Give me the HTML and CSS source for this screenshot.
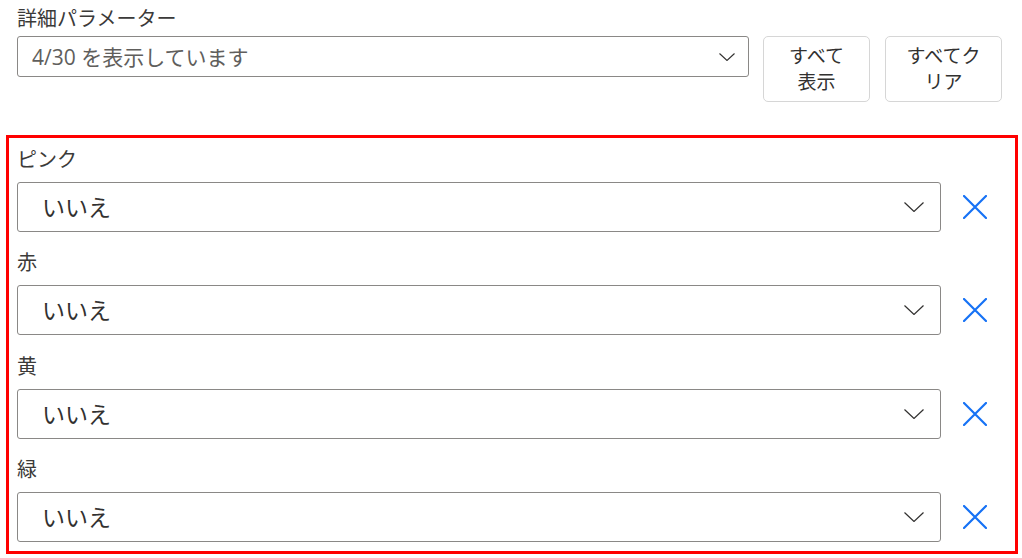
FILE: index.html
```html
<!DOCTYPE html>
<html lang="ja">
<head>
<meta charset="utf-8">
<link rel="stylesheet" href="styles.css">
</head>
<body>
<div class="top">
  <div class="top-label">詳細パラメーター</div>
  <div class="top-row">
    <div class="top-select">
      <span class="top-value">4/30 を表示しています</span>
      <svg class="chev-s" width="16" height="8" viewBox="0 0 16 8"><path d="M0.5 0.5 L8 7.5 L15.5 0.5" fill="none" stroke="#323130" stroke-width="1.1"/></svg>
    </div>
    <button class="btn btn-show">すべて<br>表示</button>
    <button class="btn btn-clear">すべてク<br>リア</button>
  </div>
</div>
<div class="section">
  <div class="row">
    <div class="label">ピンク</div>
    <div class="field">
      <div class="select"><span class="value">いいえ</span><svg class="chev" width="20" height="10" viewBox="0 0 20 10"><path d="M0.5 0.5 L10 9.5 L19.5 0.5" fill="none" stroke="#323130" stroke-width="1.2"/></svg></div>
      <button class="clear"><svg width="24" height="24" viewBox="0 0 24 24"><path d="M1 1 L23 23 M23 1 L1 23" stroke="#1672f5" stroke-width="2.2" stroke-linecap="round"/></svg></button>
    </div>
  </div>
  <div class="row">
    <div class="label">赤</div>
    <div class="field">
      <div class="select"><span class="value">いいえ</span><svg class="chev" width="20" height="10" viewBox="0 0 20 10"><path d="M0.5 0.5 L10 9.5 L19.5 0.5" fill="none" stroke="#323130" stroke-width="1.2"/></svg></div>
      <button class="clear"><svg width="24" height="24" viewBox="0 0 24 24"><path d="M1 1 L23 23 M23 1 L1 23" stroke="#1672f5" stroke-width="2.2" stroke-linecap="round"/></svg></button>
    </div>
  </div>
  <div class="row">
    <div class="label">黄</div>
    <div class="field">
      <div class="select"><span class="value">いいえ</span><svg class="chev" width="20" height="10" viewBox="0 0 20 10"><path d="M0.5 0.5 L10 9.5 L19.5 0.5" fill="none" stroke="#323130" stroke-width="1.2"/></svg></div>
      <button class="clear"><svg width="24" height="24" viewBox="0 0 24 24"><path d="M1 1 L23 23 M23 1 L1 23" stroke="#1672f5" stroke-width="2.2" stroke-linecap="round"/></svg></button>
    </div>
  </div>
  <div class="row">
    <div class="label">緑</div>
    <div class="field">
      <div class="select"><span class="value">いいえ</span><svg class="chev" width="20" height="10" viewBox="0 0 20 10"><path d="M0.5 0.5 L10 9.5 L19.5 0.5" fill="none" stroke="#323130" stroke-width="1.2"/></svg></div>
      <button class="clear"><svg width="24" height="24" viewBox="0 0 24 24"><path d="M1 1 L23 23 M23 1 L1 23" stroke="#1672f5" stroke-width="2.2" stroke-linecap="round"/></svg></button>
    </div>
  </div>
</div>
</body>
</html>
```
FILE: styles.css
```css
* { box-sizing: border-box; }
html, body { margin: 0; padding: 0; background: #fff; }
body {
  font-family: "Open Sans", "Noto Sans CJK JP", sans-serif;
  color: #323130;
  width: 1022px;
  height: 558px;
  overflow: hidden;
}
.top { padding: 7px 20px 0 17px; }
.top-label {
  font-size: 20px;
  line-height: 24px;
  color: #3b3a39;
  margin-bottom: 5px;
}
.top-row { display: flex; align-items: flex-start; }
.top-select {
  flex: 1;
  height: 41px;
  border: 1px solid #8a8886;
  border-radius: 3px;
  display: flex;
  align-items: center;
  justify-content: space-between;
  padding: 0 13px 0 14px;
}
.top-value { font-size: 21px; color: #605e5c; line-height: 26px; }
.btn {
  font-family: inherit;
  background: #fff;
  border: 1px solid #d6d6d6;
  border-radius: 5px;
  height: 66px;
  font-size: 19px;
  line-height: 26px;
  color: #323130;
  padding: 0;
}
.btn-show { width: 107px; margin-left: 14px; }
.btn-clear { width: 117px; margin-left: 15px; }
.section {
  margin: 33px 4px 4px 6px;
  border: 3px solid #ff0000;
  padding: 10px 16px 9px 8px;
  display: flex;
  flex-direction: column;
  gap: 19.33px;
}
.label {
  font-size: 20px;
  line-height: 24px;
  color: #3b3a39;
  margin-bottom: 10px;
}
.field { display: flex; align-items: center; }
.select {
  flex: 1;
  height: 50px;
  border: 1px solid #8a8886;
  border-radius: 3px;
  display: flex;
  align-items: center;
  justify-content: space-between;
  padding: 0 16px 0 24px;
}
.value { font-size: 23px; line-height: 28px; color: #323130; }
.clear {
  width: 48px;
  height: 48px;
  margin-left: 10px;
  background: none;
  border: 0;
  padding: 0;
  display: flex;
  align-items: center;
  justify-content: center;
}
```
